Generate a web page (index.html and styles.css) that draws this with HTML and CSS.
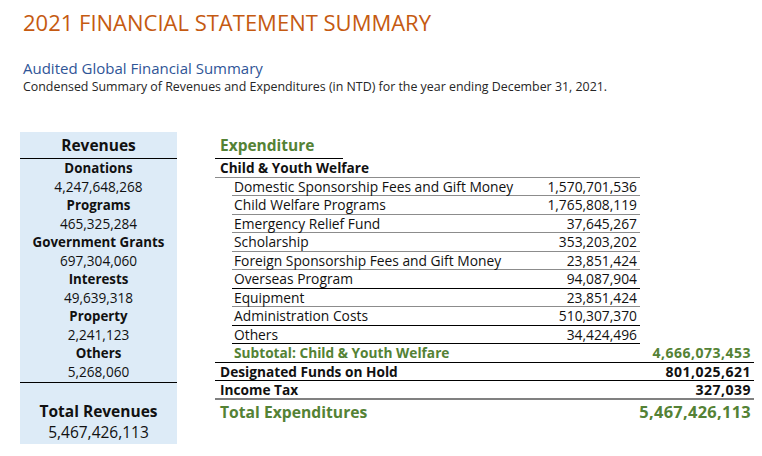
FILE: index.html
```html
<!DOCTYPE html>
<html>
<head>
<meta charset="utf-8">
<link rel="stylesheet" href="styles.css">
</head>
<body>
<header class="head">
  <h1 class="title">2021 FINANCIAL STATEMENT SUMMARY</h1>
  <h2 class="subtitle">Audited Global Financial Summary</h2>
  <p class="desc">Condensed Summary of Revenues and Expenditures (in NTD) for the year ending December 31, 2021.</p>
</header>
<main class="main">
  <section class="rev">
    <div class="rev-head">Revenues</div>
    <div class="rev-list">
      <div class="rev-label">Donations</div>
      <div class="rev-val">4,247,648,268</div>
      <div class="rev-label">Programs</div>
      <div class="rev-val">465,325,284</div>
      <div class="rev-label">Government Grants</div>
      <div class="rev-val">697,304,060</div>
      <div class="rev-label">Interests</div>
      <div class="rev-val">49,639,318</div>
      <div class="rev-label">Property</div>
      <div class="rev-val">2,241,123</div>
      <div class="rev-label">Others</div>
      <div class="rev-val">5,268,060</div>
    </div>
    <div class="rev-total">
      <div class="rev-total-label">Total Revenues</div>
      <div class="rev-total-val">5,467,426,113</div>
    </div>
  </section>
  <section class="exp">
    <div class="exp-head">Expenditure</div>
    <div class="row cat gray">Child &amp; Youth Welfare</div>
    <div class="row sub gray"><span>Domestic Sponsorship Fees and Gift Money</span><span>1,570,701,536</span></div>
    <div class="row sub gray"><span>Child Welfare Programs</span><span>1,765,808,119</span></div>
    <div class="row sub gray"><span>Emergency Relief Fund</span><span>37,645,267</span></div>
    <div class="row sub gray"><span>Scholarship</span><span>353,203,202</span></div>
    <div class="row sub gray"><span>Foreign Sponsorship Fees and Gift Money</span><span>23,851,424</span></div>
    <div class="row sub"><span>Overseas Program</span><span>94,087,904</span></div>
    <div class="row sub gray"><span>Equipment</span><span>23,851,424</span></div>
    <div class="row sub"><span>Administration Costs</span><span>510,307,370</span></div>
    <div class="row sub"><span>Others</span><span>34,424,496</span></div>
    <div class="row full subtotal"><span>Subtotal: Child &amp; Youth Welfare</span><span class="num">4,666,073,453</span></div>
    <div class="row full bold"><span>Designated Funds on Hold</span><span class="num">801,025,621</span></div>
    <div class="row full bold thick"><span>Income Tax</span><span class="num">327,039</span></div>
    <div class="row full total"><span>Total Expenditures</span><span class="num">5,467,426,113</span></div>
  </section>
</main>
</body>
</html>
```
FILE: styles.css
```css
* { box-sizing: border-box; }
body {
  margin: 0;
  padding: 0;
  font-family: "Open Sans", "Noto Sans", sans-serif;
  color: #111;
  background: #fff;
  width: 762px;
  height: 456px;
  overflow: hidden;
}
.head { padding: 6px 0 0 23px; }
.title {
  margin: 0;
  font-size: 22px;
  font-weight: 400;
  color: #c55a11;
  line-height: 32px;
}
.subtitle {
  margin: 20px 0 0;
  font-size: 15px;
  font-weight: 400;
  color: #2f5597;
  line-height: 20px;
}
.desc {
  margin: 0;
  font-size: 12.4px;
  line-height: 17px;
  color: #262626;
}
.main {
  display: flex;
  margin-top: 37px;
  padding-left: 20px;
}
.rev {
  width: 157px;
  height: 312px;
  background: #ddebf7;
  display: flex;
  flex-direction: column;
  align-items: stretch;
  text-align: center;
}
.rev-head {
  height: 27px;
  line-height: 26px;
  font-size: 15.5px;
  font-weight: 700;
  border-bottom: 1.5px solid #000;
}
.rev-list {
  display: flex;
  flex-direction: column;
  border-bottom: 1.5px solid #000;
  padding-bottom: 1px;
}
.rev-label, .rev-val {
  height: 18.5px;
  line-height: 18.5px;
  font-size: 13.6px;
}
.rev-label { font-weight: 700; font-size: 13.3px; }
.rev-total { padding-top: 18px; }
.rev-total-label {
  font-size: 15.5px;
  font-weight: 700;
  line-height: 20px;
}
.rev-total-val {
  font-size: 15.5px;
  line-height: 22px;
}
.exp {
  margin-left: 38px;
  width: 539px;
  display: flex;
  flex-direction: column;
}
.exp-head {
  width: 128px;
  height: 27px;
  line-height: 26px;
  padding-left: 5px;
  font-size: 15.5px;
  font-weight: 700;
  color: #548235;
  border-bottom: 1px solid #000;
}
.row {
  display: flex;
  justify-content: space-between;
  height: 18.5px;
  line-height: 17.5px;
  font-size: 13.8px;
  border-bottom: 1px solid #000;
}
.row.gray { border-bottom-color: #8c8c8c; }
.cat {
  width: 425px;
  padding-left: 5px;
  font-weight: 700;
  font-size: 13.6px;
}
.sub {
  margin-left: 17px;
  width: 408px;
  padding: 0 3px 0 2px;
}
.full { width: 539px; padding: 0 3px 0 5px; font-size: 13.7px; }
.subtotal {
  padding-left: 19px;
  font-weight: 700;
  color: #548235;
}
.bold { font-weight: 700; }
.num { font-size: 14px; letter-spacing: 0.5px; }
.thick { border-bottom: 2px solid #808080; height: 19px; }
.total {
  border-bottom: none;
  height: 22px;
  line-height: 24px;
  font-size: 15.7px;
  font-weight: 700;
  color: #548235;
}
.total .num { font-size: 16.4px; letter-spacing: 0.3px; }
```
